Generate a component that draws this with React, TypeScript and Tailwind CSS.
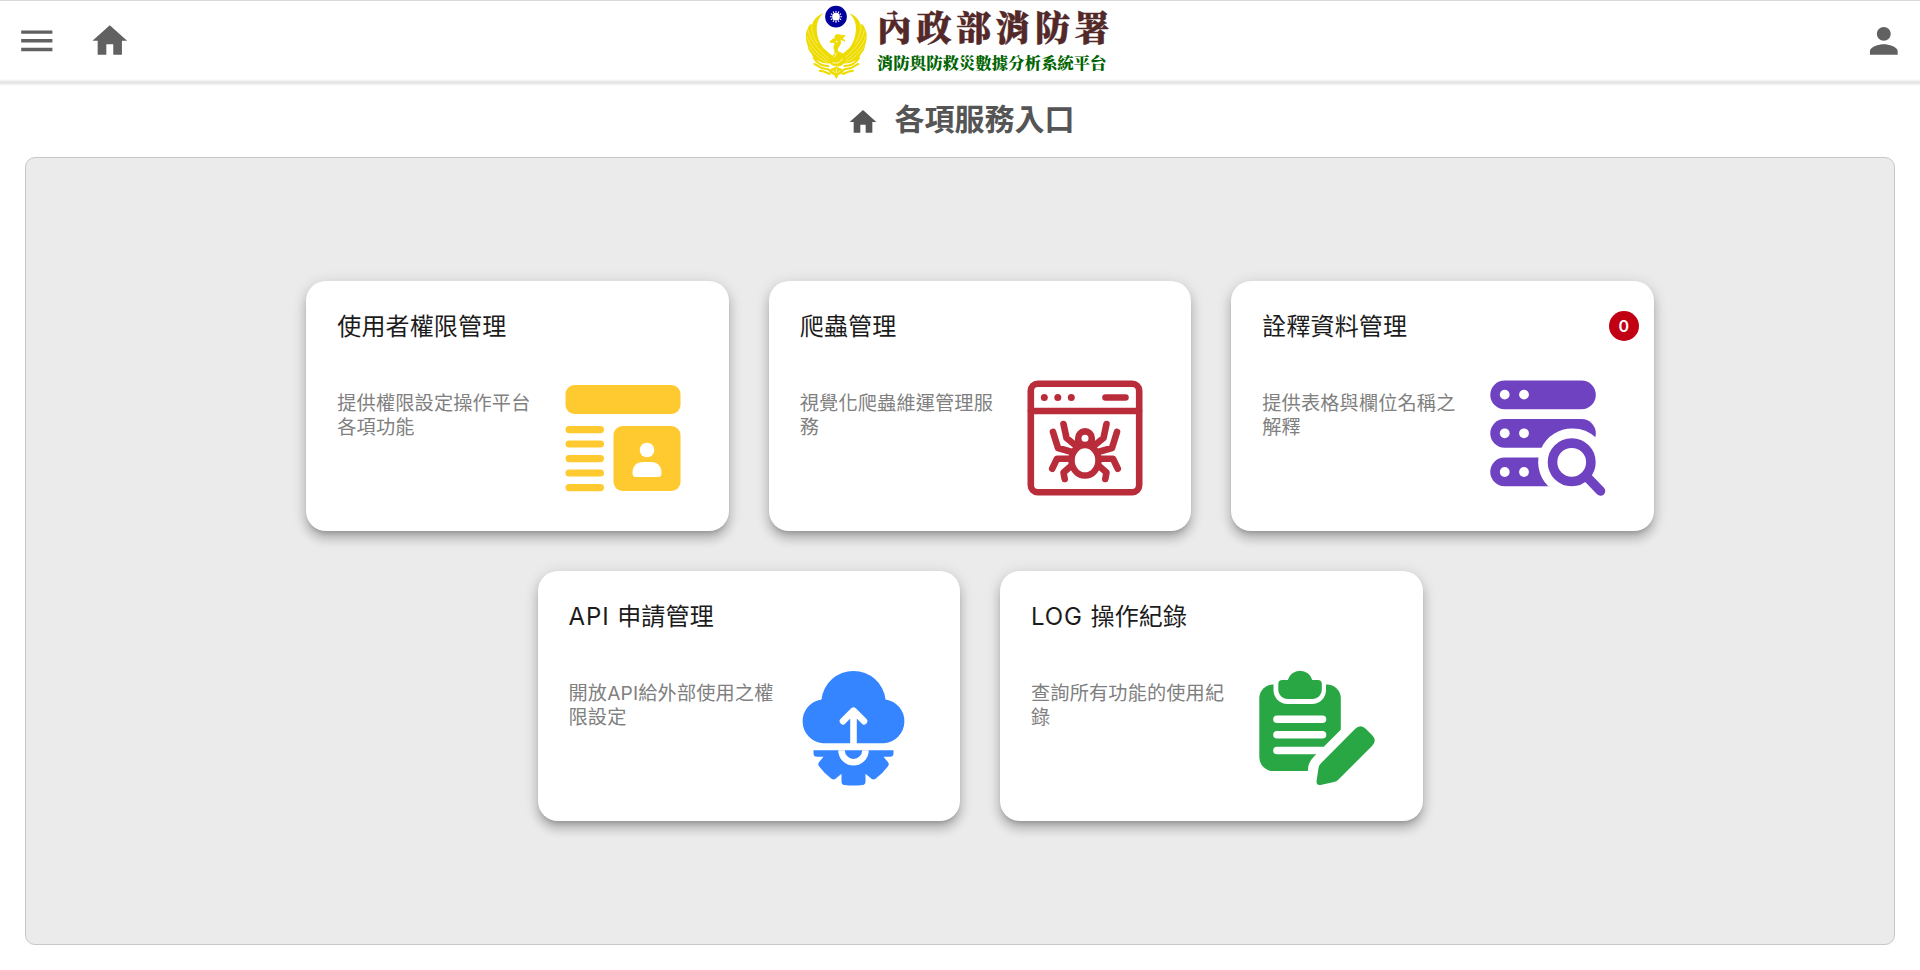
import React from "react";
import { MdHome, MdMenu, MdPerson } from "react-icons/md";

function Wing() {
  return (
    <g>
      <path
        d="M72 34C54 42 42 54 40 68C34 64 30 70 26 80C18 96 20 116 26 130C26 142 32 150 38 156C42 168 52 176 60 178C72 184 84 186 92 184C98 178 100 168 98 160C88 150 74 142 66 128C54 108 50 80 56 60C60 48 66 42 72 34Z"
        fill="#eedc00"
      />
      <path
        d="M28 84C32 108 50 138 92 172M24 104C32 130 52 152 88 178M30 134C42 152 60 170 84 182M38 70C38 96 50 124 74 150"
        fill="none"
        stroke="#fff"
        strokeWidth="1.200"
      />
      <path
        d="M58 126C66 144 80 154 96 164"
        fill="none"
        stroke="#eedc00"
        strokeWidth="8"
        strokeLinecap="round"
      />
      <path
        d="M44 168C54 184 70 192 88 192M46 186C58 190 64 202 80 200C92 200 94 208 100 214M62 206C74 206 84 212 92 216"
        fill="none"
        stroke="#eedc00"
        strokeWidth="6"
        strokeLinecap="round"
      />
    </g>
  );
}

function Emblem() {
  const rays = Array.from({ length: 12 }, (_, i) => i * 30);
  return (
    <svg width="74" height="78" viewBox="0 0 222 234" className="mt-px shrink-0">
      <Wing />
      <g transform="translate(224 0) scale(-1 1)">
        <Wing />
      </g>
      <path
        d="M94 122C94 114 102 110 110 110C106 104 108 98 116 98C122 98 130 102 138 100C136 106 130 108 124 107C132 110 136 112 137 118C132 113 126 113 122 114C128 122 122 130 116 138C112 146 118 150 128 154C142 162 142 182 126 190C116 194 102 192 94 184C88 176 92 166 100 162C108 158 110 152 106 142C102 134 108 130 108 124C104 120 98 120 94 122Z"
        fill="#eedc00"
        stroke="#eedc00"
        strokeWidth="3"
      />
      <circle cx="113" cy="119" r="2.4" fill="#fff" />
      <path d="M104 166C110 162 110 154 114 152M100 182C112 186 124 182 130 170" fill="none" stroke="#fff" strokeWidth="2.4" />
      <path d="M96 200L112 194L128 200L134 210L118 220L112 232L106 220L90 210Z" fill="#eedc00" />
      <path d="M100 206L108 212M124 206L116 212M112 200V214" stroke="#fff" strokeWidth="2" />
      <circle cx="111" cy="44" r="32.500" fill="#00009c" />
      <g stroke="#fff" strokeWidth="3.200" strokeLinecap="round">
        {rays.map((a) => (
          <path key={a} d="M111 30V27.500" transform={`rotate(${a} 111 44)`} />
        ))}
      </g>
      <circle cx="111" cy="44" r="11.500" fill="#fff" />
    </svg>
  );
}

function UserIcon() {
  return (
    <svg width="116" height="116" viewBox="0 0 116 116" fill="#ffca2f">
      <rect x="0.5" y="5" width="115" height="29" rx="9" />
      {[46, 60.4, 75, 89.4, 104].map((y) => (
        <rect key={y} x="0.5" y={y} width="38.5" height="7.2" rx="3.6" />
      ))}
      <rect x="48.5" y="46" width="67" height="65" rx="9" />
      <circle cx="82" cy="70" r="7.3" fill="#fff" />
      <path d="M67.500 93c0-8 5-11 11-11h7c6 0 11 3 11 11q0 4-3 4h-23q-3 0-3-4z" fill="#fff" />
    </svg>
  );
}

function SpiderIcon() {
  return (
    <svg width="116" height="116" viewBox="0 0 116 116" fill="none" stroke="#b92d3a" strokeWidth="6.600" strokeLinecap="round" strokeLinejoin="round">
      <rect x="3.800" y="3.800" width="108.400" height="108.400" rx="7" />
      <path d="M4 31H112M78.500 17.500H98.500" />
      <g fill="#b92d3a" stroke="none">
        <circle cx="17.300" cy="17.500" r="3.500" />
        <circle cx="30.800" cy="17.500" r="3.500" />
        <circle cx="44.300" cy="17.500" r="3.500" />
      </g>
      <ellipse cx="58" cy="80.300" rx="13.500" ry="15.300" strokeWidth="6.500" />
      <path d="M48 66v-8a10 10 0 0 1 20 0v8l-5 3a10 10 0 0 0-10 0z" fill="#b92d3a" stroke="none" />
      <circle cx="58" cy="58.200" r="3.500" fill="#fff" stroke="none" />
      <path d="M48 65l-8.500-7-3-14M45 72l-14-4-5-16M44 78.800H30l-4.800 10M44 86l-7.500 6.500 1.200 6.500M68 65l8.500-7 3-14M71 72l14-4 5-16M72 78.800h14l4.800 10M72 86l7.500 6.500-1.200 6.500" />
    </svg>
  );
}

function ServerIcon() {
  return (
    <svg width="116" height="116" viewBox="0 0 116 116" fill="#6e42c1">
      <rect x="0.300" y="0.500" width="105.500" height="28.700" rx="14.300" />
      <rect x="0.300" y="39" width="105.500" height="28.700" rx="14.300" />
      <path d="M14.600 77.500H60V106.200H14.600a14.350 14.350 0 0 1 0-28.700z" />
      <path d="M82 48.500a33.500 33.500 0 0 1 24 9.300V106.200H58.200A33.500 33.500 0 0 1 51.500 67.800 34 34 0 0 1 82 48.500z" fill="#fff" />
      {[14.6, 53.3, 92].map((y) => (
        <g key={y} fill="#fff">
          <circle cx="14.700" cy={y} r="4.900" />
          <circle cx="34" cy={y} r="4.900" />
        </g>
      ))}
      <circle cx="81.700" cy="82.300" r="19.200" fill="#fff" stroke="#6e42c1" strokeWidth="9.600" />
      <path d="M97 97L110.500 111" stroke="#6e42c1" strokeWidth="9.600" strokeLinecap="round" />
    </svg>
  );
}

function CloudIcon() {
  return (
    <svg width="116" height="116" viewBox="0.5 0.300 116 116" fill="#3485ff">
      <path d="M27.300 73.500A22 22 0 0 1 26 29.800a32.200 32.200 0 0 1 64 0 22 22 0 0 1-1.300 43.700z" />
      <path d="M58 76V43M47.500 51.500L58 41l10.500 10.500" fill="none" stroke="#fff" strokeWidth="6.600" strokeLinecap="round" strokeLinejoin="round" />
      <path d="M18 80.500H98v3q0 3.500-3.500 3.500H88l4.500 5.500q1.500 2 0 4A56 56 0 0 1 80 109q-2 1.500-4 0l-6-5v8q0 3-3 3.300a70 70 0 0 1-18 0q-3-.3-3-3.300v-8l-6 5q-2 1.500-4 0A56 56 0 0 1 23.500 96.500q-1.500-2 0-4L28 87h-6.500q-3.500 0-3.500-3.500z" />
      <path d="M46 80.500a12 12 0 0 0 24 0" fill="none" stroke="#fff" strokeWidth="6.600" />
    </svg>
  );
}

function ClipboardIcon() {
  return (
    <svg width="116" height="116" viewBox="0 0 116 116" fill="#29a745">
      <rect x="0.300" y="14.500" width="81.500" height="86.500" rx="14" />
      <path d="M14.500 9h52.500V20a14 14 0 0 1-14 14H28.500a14 14 0 0 1-14-14z" fill="#fff" />
      <path d="M19.300 14q0-4 4-4h5.500a12.700 12.700 0 0 1 24.500 0h5.500q4 0 4 4v6a9 9 0 0 1-9 9h-25.500a9 9 0 0 1-9-9z" />
      <path d="M18 49.200h45.500M18 64.800h45.500M18 80.500h45.500" stroke="#fff" strokeWidth="7.600" strokeLinecap="round" />
      <path d="M83 58.500L55 86.500q-5 5-5.700 10L48.700 102H83z" fill="#fff" />
      <path d="M96 59q5.500-5.500 11 0l6 6q5.500 5.500 0 11L79.500 109.500q-2 2-4.500 2.500l-13.500 3q-4 .5-4-3.500l2-13.500q.3-2.500 2-4.200z" />
    </svg>
  );
}

type Service = {
  prefix?: string;
  title: string;
  text: string;
  Icon: () => React.JSX.Element;
  badge?: number;
};

const rows: Service[][] = [
  [
    { title: "使用者權限管理", text: "提供權限設定操作平台各項功能", Icon: UserIcon },
    { title: "爬蟲管理", text: "視覺化爬蟲維運管理服務", Icon: SpiderIcon },
    { title: "詮釋資料管理", text: "提供表格與欄位名稱之解釋", Icon: ServerIcon, badge: 0 },
  ],
  [
    { prefix: "API", title: "申請管理", text: "開放API給外部使用之權限設定", Icon: CloudIcon },
    { prefix: "LOG", title: "操作紀錄", text: "查詢所有功能的使用紀錄", Icon: ClipboardIcon },
  ],
];

function Card({ prefix, title, text, Icon, badge }: Service) {
  return (
    <section className="h-[250px] w-[422.5px] rounded-[20px] bg-white pt-[27px] pr-[15px] pl-[31px] shadow-[0_5px_5px_-3px_rgba(0,0,0,0.2),0_8px_10px_1px_rgba(0,0,0,0.14),0_3px_14px_2px_rgba(0,0,0,0.12)]">
      <div className="flex h-9 items-center justify-between">
        <h2 className="pt-0.5 text-2xl leading-9 tracking-[0.15px] text-[#1c1c1c]">
          {prefix && <span className="tracking-[0.9px]">{prefix} </span>}
          {title}
        </h2>
        {badge !== undefined && (
          <span className="flex size-[30px] items-center justify-center rounded-full bg-[#c20014] text-base font-semibold text-white">
            {badge}
          </span>
        )}
      </div>
      <div className="mt-9 flex justify-between pr-[33px]">
        <p className="mt-[11px] w-[210px] text-[19.2px] leading-6 tracking-[0.14px] text-[#808080]">{text}</p>
        <Icon />
      </div>
    </section>
  );
}

export default function App() {
  return (
    <div className="flex h-[970px] flex-col bg-white font-['Inter','Noto_Sans_CJK_TC',sans-serif]">
      <header className="grid h-[79px] shrink-0 grid-cols-[1fr_auto_1fr] items-center border-t border-[#d9d9d9] text-[#616161]">
        <nav className="flex items-center gap-[31px] pt-0.5 pl-4">
          <MdMenu className="size-[41.6px]" />
          <MdHome className="size-[41.6px]" />
        </nav>
        <div className="flex h-[78px] items-start pr-[7px]">
          <Emblem />
          <div className="flex flex-col pl-1 font-['Noto_Serif_CJK_TC',serif] font-black whitespace-nowrap">
            <span className="h-[49px] text-[35px] leading-[51px] tracking-[4.5px] text-[#532828] [-webkit-text-stroke:0.5px_#532828]">
              內政部消防署
            </span>
            <span className="h-6 text-[16.4px] leading-6 text-[#006400]">消防與防救災數據分析系統平台</span>
          </div>
        </div>
        <div className="flex justify-end pt-0.5 pr-[15px]">
          <MdPerson className="size-[41.6px]" />
        </div>
      </header>
      <div className="h-[7px] shrink-0 bg-linear-to-b from-white via-[#e2e2e2] to-white" />
      <h1 className="flex h-[71px] shrink-0 items-center justify-center gap-4 pl-px text-[30px] font-bold text-[#555555]">
        <MdHome className="size-8" />
        <span className="-mt-1.5 leading-10">各項服務入口</span>
      </h1>
      <main className="mx-[25px] flex h-[788px] shrink-0 flex-col gap-10 rounded-[10px] border border-[#c8c8c8] bg-[#ebebeb] pt-[123px] pl-10">
        {rows.map((row) => (
          <div key={row[0].title} className="flex justify-center gap-10">
            {row.map((service) => (
              <Card key={service.title} {...service} />
            ))}
          </div>
        ))}
      </main>
    </div>
  );
}
